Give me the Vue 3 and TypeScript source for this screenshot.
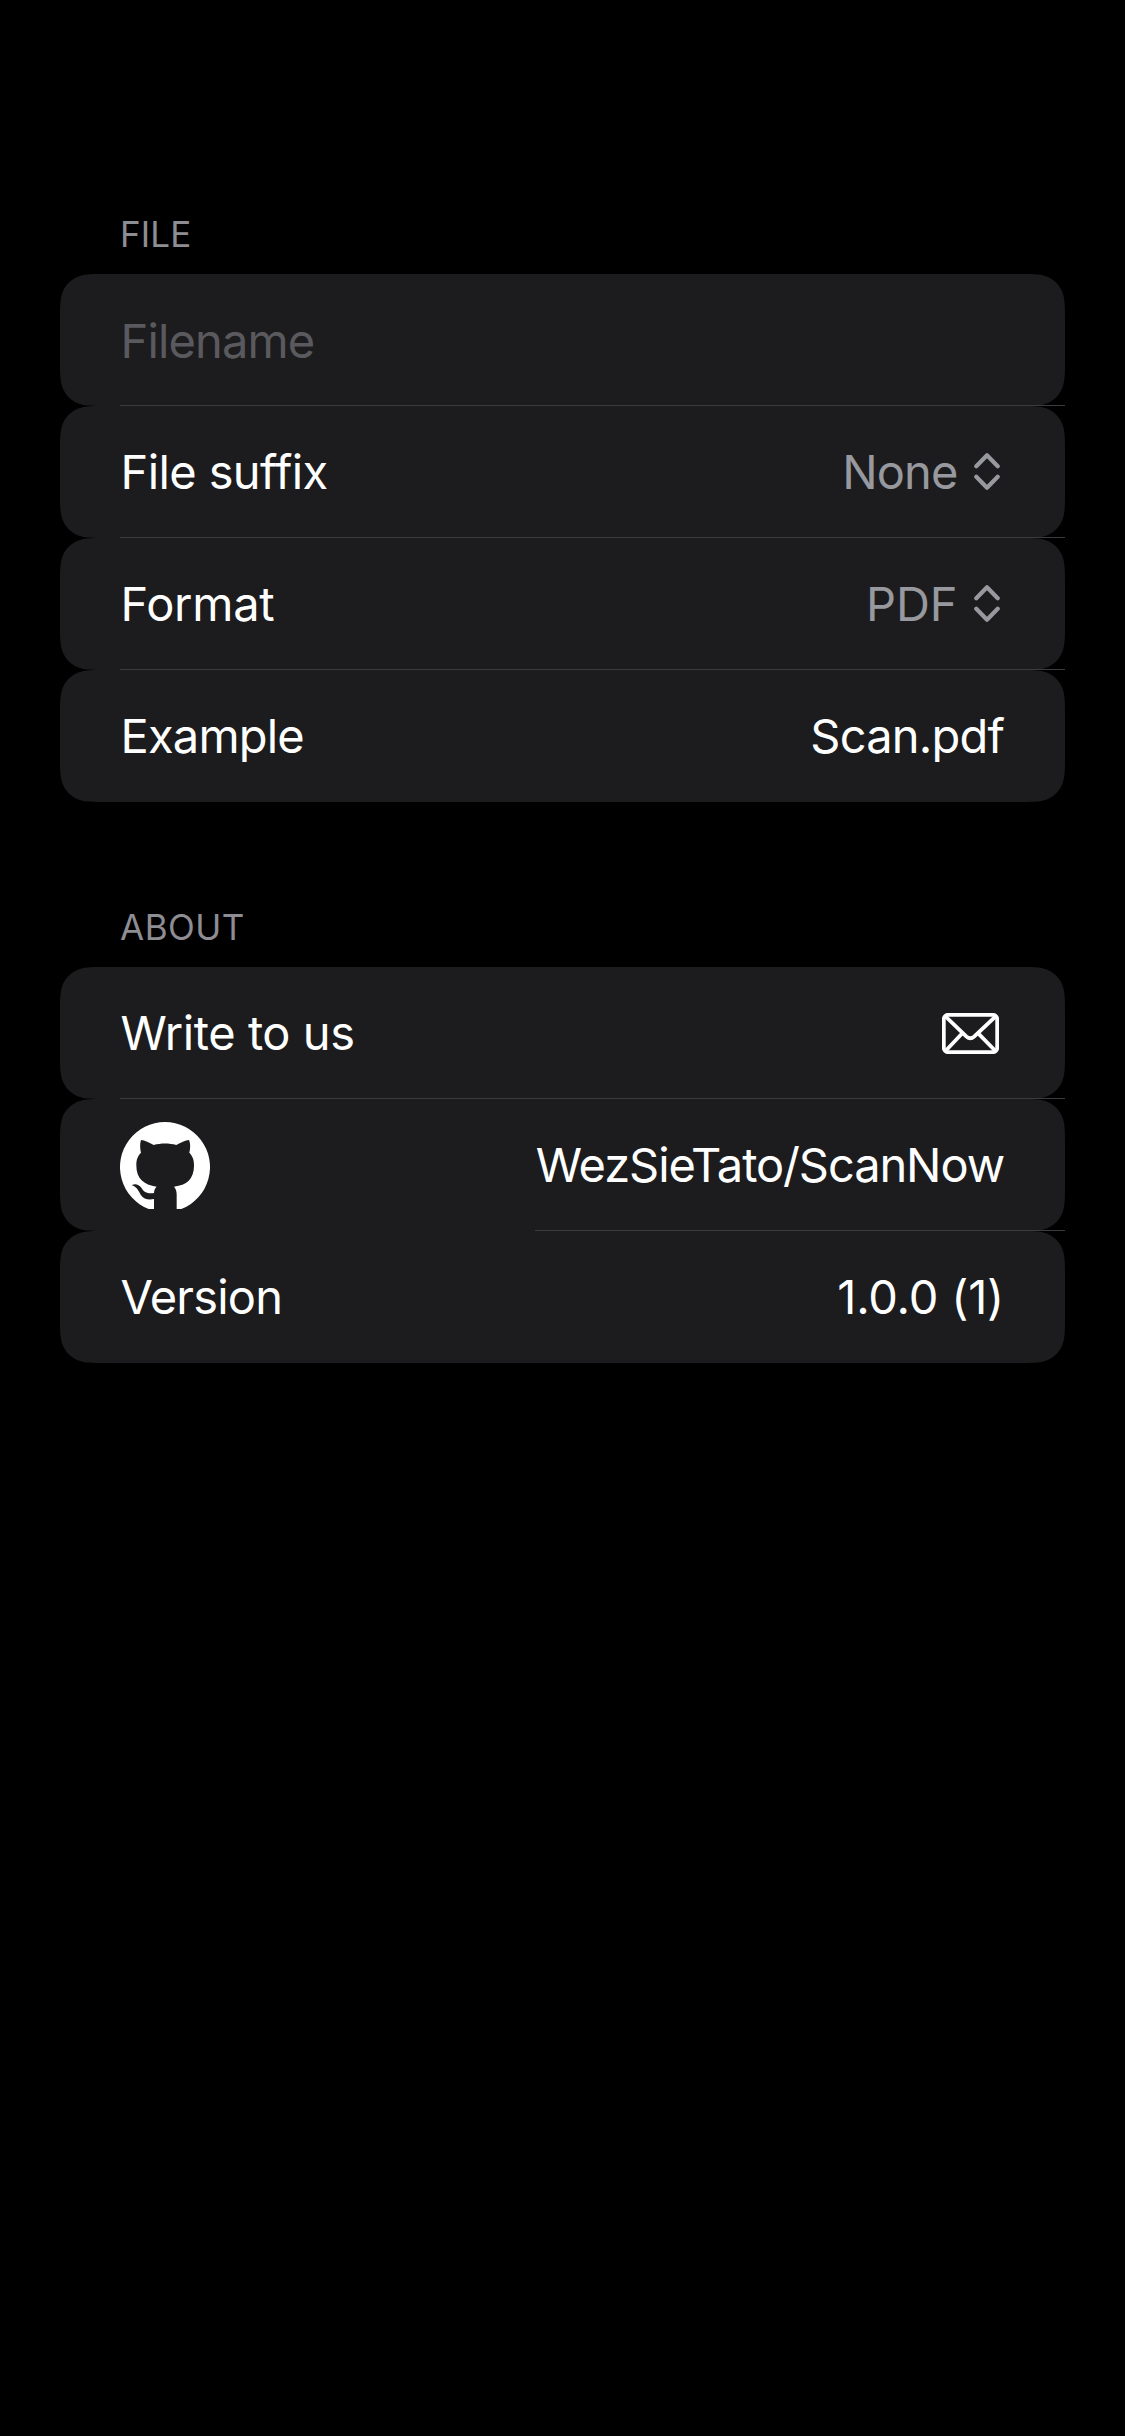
<script setup lang="ts">
type RowKind = 'field' | 'picker' | 'text' | 'mail' | 'github'

interface Row {
  kind: RowKind
  label: string
  value?: string
  id: string
}

interface Section {
  title: string
  id: string
  rows: Row[]
}

const sections: Section[] = [
  {
    title: 'FILE',
    id: 'file',
    rows: [
      { kind: 'field', label: 'Filename', id: 'filename' },
      { kind: 'picker', label: 'File suffix', value: 'None', id: 'suffix' },
      { kind: 'picker', label: 'Format', value: 'PDF', id: 'format' },
      { kind: 'text', label: 'Example', value: 'Scan.pdf', id: 'example' },
    ],
  },
  {
    title: 'ABOUT',
    id: 'about',
    rows: [
      { kind: 'mail', label: 'Write to us', id: 'write' },
      { kind: 'github', label: '', value: 'WezSieTato/ScanNow', id: 'repo' },
      { kind: 'text', label: 'Version', value: '1.0.0 (1)', id: 'version' },
    ],
  },
]
</script>

<template>
  <main class="screen">
    <section v-for="section in sections" :key="section.id" class="section">
      <h2 class="title" :class="'title-' + section.id"><span>{{ section.title }}</span></h2>
      <div class="rows">
        <div v-for="row in section.rows" :key="row.id" class="row" :class="['row-' + row.kind, 'row-' + row.id]">
          <svg v-if="row.kind === 'github'" class="github" viewBox="30 36 270 261">
            <path class="disc" d="M116 297A135 135 0 1 1 214 297Z" />
            <path
              class="cat"
              d="M93 90C104 91 118 98 131 105C153 99 177 99 199 105C212 98 226 91 237 90C242 102 241 116 238 128C248 139 252 149 252 166C252 208 230 226 192 230C197 235 200 243 200 253V298H132V267C116 270 101 268 92 254C86 244 80 229 65 226C75 219 86 223 94 233C100 242 106 252 132 249C132 241 135 234 140 230C101 225 79 206 79 166C79 149 83 138 93 128C90 116 89 102 93 90Z"
            />
          </svg>
          <span v-else class="label">{{ row.label }}</span>
          <span v-if="row.value" class="value">{{ row.value }}</span>
          <svg v-if="row.kind === 'picker'" class="chevrons" viewBox="0 0 26 38">
            <path d="M2.3 14.2L13 3.3L23.7 14.2M2.3 24.8L13 35.7L23.7 24.8" />
          </svg>
          <svg v-if="row.kind === 'mail'" class="mail" viewBox="0 0 57 41">
            <rect x="1.8" y="1.8" width="53.4" height="37.4" rx="4.5" />
            <path d="M3 3L24.5 23.6Q28.3 27 32.1 23.6L54 3M3.5 38L20.3 20.3M53.5 38L36.2 20.3" />
          </svg>
        </div>
      </div>
    </section>
  </main>
</template>

<style>
body {
  margin: 0;
  background: #000;
}
</style>

<style scoped>
.screen {
  box-sizing: border-box;
  width: 1125px;
  height: 2436px;
  padding: 209px 60px 0;
  overflow: hidden;
  background: #000;
  color: #fff;
  font-family: Inter, "Liberation Sans", sans-serif;
}

.section {
  margin-bottom: 100px;
}

.title {
  height: 65px;
  margin: 0;
  padding-left: 60px;
  color: #8d8d93;
  font-size: 35px;
  font-weight: 400;
  line-height: 51px;
  letter-spacing: 0.1px;
}

.title-about {
  letter-spacing: 0.5px;
}

.row {
  position: relative;
  display: flex;
  align-items: center;
  box-sizing: border-box;
  height: 132px;
  padding: 0 61px 0 60px;
  font-size: 47px;
  line-height: 130px;
  white-space: nowrap;
  isolation: isolate;
}

/* Card surface with continuous corners */
.row::before {
  content: "";
  position: absolute;
  inset: 0;
  z-index: -1;
  background: #1c1c1e;
  clip-path: path("M45.9 0H959.1C972.35 0 978.95 0 984.9 1.96L986.06 2.25C993.82 5.07 999.93 11.18 1002.75 18.94C1005 26.05 1005 32.65 1005 45.9V86.1C1005 99.35 1005 105.95 1002.75 113.06C999.93 120.82 993.82 126.93 986.06 129.75L984.9 130.04C978.95 132 972.35 132 959.1 132H45.9C32.65 132 26.05 132 20.1 130.04L18.94 129.75C11.18 126.93 5.07 120.82 2.25 113.06C0 105.95 0 99.35 0 86.1V45.9C0 32.65 0 26.05 2.25 18.94C5.07 11.18 11.18 5.07 18.94 2.25L20.1 1.96C26.05 0 32.65 0 45.9 0Z");
}

/* Hairline separator */
.row:not(:last-child)::after {
  content: "";
  position: absolute;
  right: 0;
  bottom: 0;
  left: 60px;
  height: 1px;
  background: #3c3c3f;
}

.row-repo:not(:last-child)::after {
  left: 475px;
}

.label {
  padding-left: 0.5px;
  letter-spacing: -0.8px;
}

.value {
  margin-left: auto;
  letter-spacing: -0.8px;
}

.row-field {
  padding-top: 2px;
}

.row-field .label {
  color: #5a5a5e;
  letter-spacing: -0.85px;
}

.row-suffix .label {
  letter-spacing: -0.6px;
}

.row-format .label {
  letter-spacing: -0.25px;
}

.row-write .label {
  letter-spacing: -0.45px;
}

.row-picker .value {
  color: #98989f;
}

.row-suffix .value {
  letter-spacing: -0.9px;
}

.row-format .value {
  letter-spacing: -0.1px;
}

.row-repo .value {
  letter-spacing: -1.1px;
}

.row-version .value {
  letter-spacing: -0.2px;
}

.chevrons {
  width: 26px;
  height: 38px;
  margin: 0 4px 2px 16.5px;
  fill: none;
  stroke: #98989f;
  stroke-width: 4.2;
  stroke-linecap: round;
  stroke-linejoin: round;
}

.mail {
  width: 57px;
  height: 41px;
  margin: 0 5px 0 auto;
  fill: none;
  stroke: #fff;
  stroke-width: 3.8;
  stroke-linejoin: round;
}

.github {
  width: 90px;
  height: 87px;
}

.disc {
  fill: #fff;
}

.cat {
  fill: #1c1c1e;
}
</style>
